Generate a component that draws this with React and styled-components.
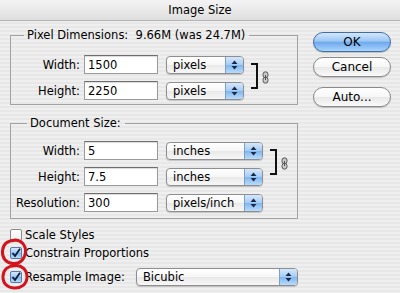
import React from "react";
import styled, { createGlobalStyle } from "styled-components";

const GlobalStyle = createGlobalStyle`
  html, body {
    margin: 0;
    padding: 0;
    background: #ececec;
  }
  body {
    font-family: "DejaVu Sans", "Liberation Sans", sans-serif;
    font-size: 11.5px;
    color: #000;
  }
`;

const Window = styled.div`
  position: relative;
  width: 400px;
  height: 293px;
  overflow: hidden;
  display: flex;
  flex-direction: column;
  background: repeating-linear-gradient(
    to bottom,
    #efefef 0,
    #efefef 2px,
    #e7e7e7 2px,
    #e7e7e7 4px
  );
`;

const TitleBar = styled.div`
  height: 20px;
  flex: none;
  display: flex;
  align-items: center;
  justify-content: center;
  font-size: 11.5px;
  background: linear-gradient(#f3f3f3, #e8e8e8 60%, #dedede);
  border-bottom: 1px solid #b4b4b4;
`;

const Body = styled.div`
  display: flex;
  flex: 1;
`;

const LeftCol = styled.div`
  margin-left: 10px;
  width: 288px;
  display: flex;
  flex-direction: column;
`;

const RightCol = styled.div`
  margin-left: 15px;
  width: 78px;
  padding-top: 11px;
  display: flex;
  flex-direction: column;
`;

const Group = styled.fieldset`
  box-sizing: border-box;
  width: 288px;
  margin: ${(p) => p.$mt}px 0 0 0;
  padding: ${(p) => p.$pt}px 0 ${(p) => p.$pb}px 0;
  border: 1px solid #a2a2a2;
  min-inline-size: 0;
`;

const Legend = styled.legend`
  margin-left: ${(p) => p.$ml}px;
  padding: 0 4px 0 3px;
  line-height: 14px;
  white-space: pre;
`;

const Grid = styled.div`
  display: grid;
  grid-template-columns: 69px 78px ${(p) => p.$popw}px 10px 10px;
  grid-auto-rows: 19px;
  column-gap: 4px;
  row-gap: 7px;
  align-items: center;
`;

const Label = styled.span`
  text-align: right;
  white-space: nowrap;
`;

const Field = styled.div`
  box-sizing: border-box;
  height: 19px;
  width: 74px;
  padding-left: 3px;
  display: flex;
  align-items: center;
  background: #fff;
  border: 1px solid #9a9a9a;
  border-top-color: #6e6e6e;
  box-shadow: inset 0 1px 1px rgba(0, 0, 0, 0.15);
`;

const Popup = styled.div`
  box-sizing: border-box;
  width: ${(p) => p.$w}px;
  height: 18px;
  margin-left: ${(p) => p.$ml || 0}px;
  display: flex;
  border: 1px solid #8e8e8e;
  border-radius: 4px;
  overflow: hidden;
  background: linear-gradient(#ffffff, #f6f6f6 50%, #e9e9e9 52%, #f7f7f7);
  box-shadow: 0 1px 1px rgba(0, 0, 0, 0.18);
`;

const PopupText = styled.span`
  flex: 1;
  padding-left: 6px;
  line-height: 16px;
  white-space: nowrap;
`;

const Stepper = styled.span`
  width: 17px;
  display: flex;
  align-items: center;
  justify-content: center;
  border-left: 1px solid #7f9fc8;
  background: linear-gradient(#d4e7fb, #a6cdf5 48%, #80b6f0 52%, #b9dcfb);
`;

const Bracket = styled.div`
  grid-column: 4;
  grid-row: 1 / span 2;
  align-self: stretch;
  margin: 8px 0 11px 3px;
  width: 7px;
  box-sizing: border-box;
  border: 2px solid #111;
  border-left: none;
`;

const Chain = styled.div`
  grid-column: 5;
  grid-row: 1 / span 2;
  align-self: center;
  display: flex;
  margin: 0 0 0 0;
`;

const Checks = styled.div`
  margin-top: 7px;
  display: flex;
  flex-direction: column;
`;

const CheckRow = styled.div`
  height: ${(p) => p.$h || 18}px;
  margin-top: ${(p) => p.$mt || 0}px;
  display: flex;
  align-items: center;
  white-space: nowrap;
`;

const Box = styled.span`
  box-sizing: border-box;
  width: 12px;
  height: 12px;
  margin-right: 3px;
  display: flex;
  align-items: center;
  justify-content: center;
  border: 1px solid ${(p) => (p.$on ? "#5a7aa6" : "#8c8c8c")};
  border-radius: 2px;
  background: ${(p) =>
    p.$on
      ? "linear-gradient(#d6e8fb, #9fc8f3 50%, #7db3ee 52%, #b8dbfb)"
      : "linear-gradient(#ffffff, #f1f1f1)"};
`;

const Button = styled.div`
  box-sizing: border-box;
  height: 20px;
  margin-top: ${(p) => p.$mt || 0}px;
  display: flex;
  align-items: center;
  justify-content: center;
  font-size: 12px;
  border-radius: 10px;
  border: 1px solid ${(p) => (p.$primary ? "#3e6ea4" : "#8a8a8a")};
  background: ${(p) =>
    p.$primary
      ? "linear-gradient(#d3e7fb, #9cc7f4 45%, #6fa9ee 52%, #a9d4fb)"
      : "linear-gradient(#ffffff, #f7f7f7 48%, #e8e8e8 52%, #fafafa)"};
  box-shadow: 0 1px 1px rgba(0, 0, 0, 0.2);
`;

const Marks = styled.svg`
  position: absolute;
  left: 0;
  top: 236px;
  pointer-events: none;
`;

function Arrows() {
  return (
    <svg width="7" height="10" viewBox="0 0 7 10">
      <path d="M3.5 0.5 L6.5 4 H0.5 Z" fill="#1b2a48" />
      <path d="M3.5 9.5 L6.5 6 H0.5 Z" fill="#1b2a48" />
    </svg>
  );
}

function Select({ w, ml, children }) {
  return (
    <Popup $w={w} $ml={ml}>
      <PopupText>{children}</PopupText>
      <Stepper>
        <Arrows />
      </Stepper>
    </Popup>
  );
}

function Link() {
  return (
    <Chain>
      <svg width="7" height="13" viewBox="0 0 7 13">
        <rect x="1" y="0.8" width="5" height="6" rx="2.5" fill="#c9c9c9" stroke="#555" strokeWidth="1" />
        <rect x="1" y="6.2" width="5" height="6" rx="2.5" fill="#c9c9c9" stroke="#555" strokeWidth="1" />
        <line x1="3.5" y1="4" x2="3.5" y2="9" stroke="#555" strokeWidth="1" />
      </svg>
    </Chain>
  );
}

function Check({ on }) {
  return (
    <Box $on={on}>
      {on && (
        <svg width="10" height="10" viewBox="0 0 10 10">
          <path d="M1.5 5 L4 8 L9 0.8" fill="none" stroke="#0d1d3c" strokeWidth="1.8" />
        </svg>
      )}
    </Box>
  );
}

export default function App() {
  return (
    <Window>
      <GlobalStyle />
      <TitleBar>Image Size</TitleBar>
      <Body>
        <LeftCol>
          <Group $mt={7} $pt={13} $pb={4}>
            <Legend $ml={13}>{"Pixel Dimensions:  9.66M (was 24.7M)"}</Legend>
            <Grid $popw={78}>
              <Label>Width:</Label>
              <Field>1500</Field>
              <Select w={78}>pixels</Select>
              <Bracket />
              <Link />
              <Label>Height:</Label>
              <Field>2250</Field>
              <Select w={78}>pixels</Select>
            </Grid>
          </Group>

          <Group $mt={11} $pt={11} $pb={6}>
            <Legend $ml={16}>Document Size:</Legend>
            <Grid $popw={97}>
              <Label>Width:</Label>
              <Field>5</Field>
              <Select w={97}>inches</Select>
              <Bracket />
              <Link />
              <Label>Height:</Label>
              <Field>7.5</Field>
              <Select w={97}>inches</Select>
              <Label>Resolution:</Label>
              <Field>300</Field>
              <Select w={97}>pixels/inch</Select>
            </Grid>
          </Group>

          <Checks>
            <CheckRow>
              <Check />
              Scale Styles
            </CheckRow>
            <CheckRow>
              <Check on />
              Constrain Proportions
            </CheckRow>
            <CheckRow $h={19} $mt={5}>
              <Check on />
              Resample Image:
              <Select w={167} ml={11}>
                Bicubic
              </Select>
            </CheckRow>
          </Checks>
        </LeftCol>

        <RightCol>
          <Button $primary>OK</Button>
          <Button $mt={5}>Cancel</Button>
          <Button $mt={10}>Auto...</Button>
        </RightCol>
      </Body>

      <Marks width="34" height="57" viewBox="0 0 34 57">
        <path
          d="M14 4 C21 3.5 26 9 25.5 16 C25 23 20 28 13 27.5 C6 27 2 22 2.5 15 C3 8 8 4.5 15 4.2"
          fill="none"
          stroke="#d0151f"
          strokeWidth="3"
        />
        <path
          d="M15 29.5 C22 29 27 34 27 41 C27 48 21 52.5 14 52 C7 51.5 2.5 47 3 40 C3.5 33 8.5 29.5 16 29.8"
          fill="none"
          stroke="#d0151f"
          strokeWidth="3"
        />
      </Marks>
    </Window>
  );
}
